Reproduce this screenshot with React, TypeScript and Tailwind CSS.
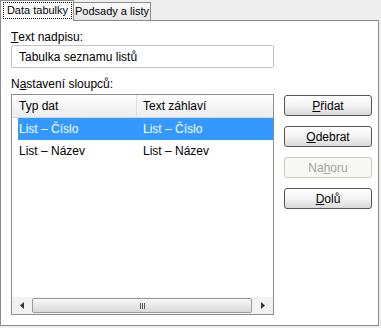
import React from "react";

function Btn({ children, disabled }: { children: React.ReactNode; disabled?: boolean }) {
  return (
    <div
      className={
        "h-[21px] w-[88px] rounded-[3px] border flex items-center justify-center " +
        (disabled
          ? "border-[#cac8bb] bg-[#f7f7f4] text-[#a3a3a3]"
          : "border-[#555555] bg-gradient-to-b from-[#ffffff] via-[#f3f3f3] to-[#d9d9d9] text-black")
      }
    >
      {children}
    </div>
  );
}

export default function App() {
  return (
    <div
      className="w-[381px] h-[328px] bg-[#eeeeee] text-[12px] text-black leading-none overflow-hidden whitespace-nowrap"
      style={{ fontFamily: '"Liberation Sans", Arial, sans-serif' }}
    >
      {/* tabs */}
      <div className="flex items-end h-[21px] relative z-10">
        <div className="h-[21px] w-[74px] bg-white border-l border-t border-r border-[#8c8c8c] flex items-start pt-[1px] pl-[2px]">
          <div className="h-[17px] w-[69px] border border-dotted border-black flex items-center justify-center text-[11px]">
            Data tabulky
          </div>
        </div>
        <div className="h-[18px] w-[77px] mb-[1px] bg-gradient-to-b from-[#fbfbfb] to-[#e4e4e4] border-t border-r border-[#8c8c8c] flex items-center justify-center text-[11px]">
          Podsady a listy
        </div>
      </div>
      {/* panel */}
      <div className="-mt-[1px] h-[306px] w-[379px] bg-white border border-[#8c8c8c] pl-[10px] pt-[10px]">
        <div className="h-[12px] flex items-center">
          <span className="underline">T</span>ext nadpisu:
        </div>
        <div className="mt-[2px] h-[23px] w-[263px] rounded-[2px] border border-[#c3c3c3] flex items-center pl-[7px]">
          Tabulka seznamu listů
        </div>
        <div className="mt-[10px] h-[12px] flex items-center">
          N<span className="underline">a</span>stavení sloupců:
        </div>
        <div className="flex mt-[4px]">
          {/* list */}
          <div className="h-[221px] w-[263px] border border-[#8c8c8c] flex flex-col">
            <div className="h-[23px] flex bg-gradient-to-b from-[#ffffff] to-[#ececec] border-b border-[#d6d6d6]">
              <div className="w-[125px] border-r border-[#dedede] flex items-center pl-[7px]">Typ dat</div>
              <div className="flex items-center pl-[6px]">Text záhlaví</div>
            </div>
            <div className="ml-[6px] h-[22px] flex bg-[#3399ff] text-white">
              <div className="w-[119px] flex items-center pl-[1px]">List – Číslo</div>
              <div className="flex items-center pl-[6px]">List – Číslo</div>
            </div>
            <div className="ml-[6px] h-[21px] flex">
              <div className="w-[119px] flex items-center pl-[1px]">List – Název</div>
              <div className="flex items-center pl-[6px]">List – Název</div>
            </div>
            <div className="flex-1" />
            {/* scrollbar */}
            <div className="h-[17px] flex bg-[#f2f2f2]">
              <div className="w-[20px] flex items-center justify-center">
                <svg width="4" height="7" viewBox="0 0 4 7">
                  <path d="M4 0 L0 3.5 L4 7 Z" fill="#333" />
                </svg>
              </div>
              <div className="flex-1 my-[1px] border border-[#9a9a9a] rounded-[2px] bg-gradient-to-b from-[#f8f8f8] to-[#d8d8d8] flex items-center justify-center">
                <div className="flex gap-[1px]">
                  <div className="w-[1px] h-[6px] bg-[#555]" />
                  <div className="w-[1px] h-[6px] bg-[#555]" />
                  <div className="w-[1px] h-[6px] bg-[#555]" />
                </div>
              </div>
              <div className="w-[21px] flex items-center justify-center">
                <svg width="4" height="7" viewBox="0 0 4 7">
                  <path d="M0 0 L4 3.5 L0 7 Z" fill="#333" />
                </svg>
              </div>
            </div>
          </div>
          {/* buttons */}
          <div className="ml-[10px] mt-[1px] flex flex-col gap-[10px]">
            <Btn>
              <span className="underline">P</span>řidat
            </Btn>
            <Btn>
              <span className="underline">O</span>debrat
            </Btn>
            <Btn disabled>
              Na<span className="underline">h</span>oru
            </Btn>
            <Btn>
              <span className="underline">D</span>olů
            </Btn>
          </div>
        </div>
      </div>
    </div>
  );
}
